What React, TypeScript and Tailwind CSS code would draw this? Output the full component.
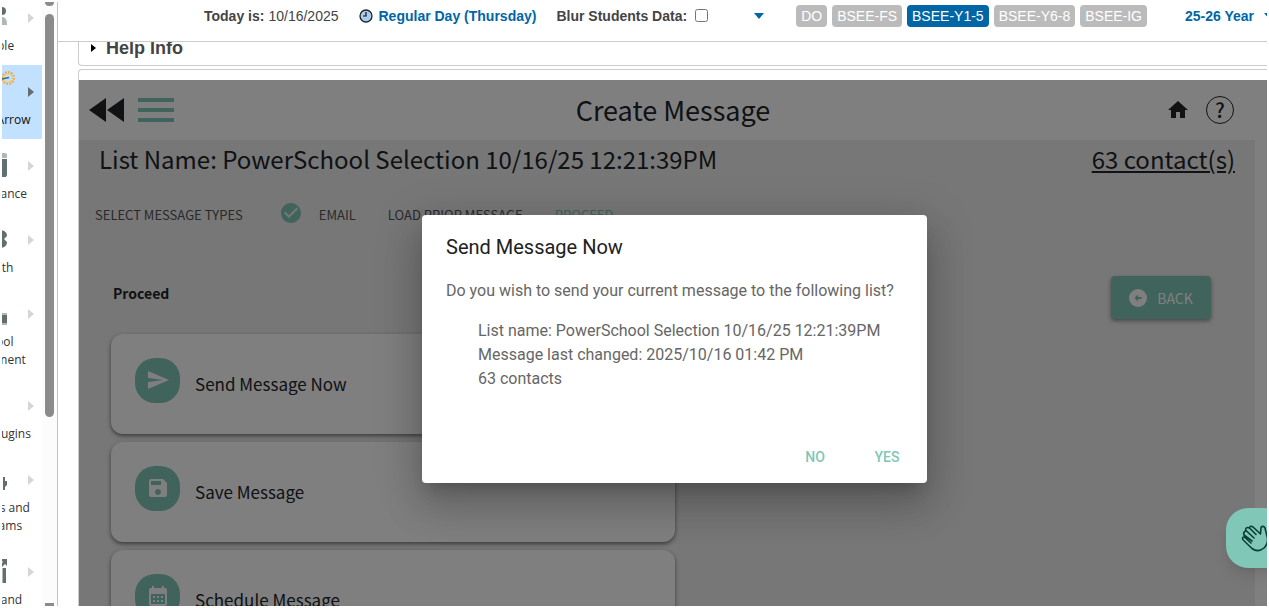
import React, { useState } from "react";
import {
  MdSend,
  MdSave,
  MdCalendarMonth,
  MdHome,
  MdCheckCircle,
} from "react-icons/md";

const schools = ["DO", "BSEE-FS", "BSEE-Y1-5", "BSEE-Y6-8", "BSEE-IG"];

const navItems = [
  { label: "People", icon: "people" },
  { label: "SchoolArrow", icon: "sun" },
  { label: "Attendance", icon: "attendance" },
  { label: "Health", icon: "health" },
  { label: "School Enrollment", icon: "enrollment" },
  { label: "State Plugins", icon: "" },
  { label: "Courses and Programs", icon: "programs" },
  { label: "Tools and", icon: "export" },
];

const actions = [
  { label: "Send Message Now", Icon: MdSend },
  { label: "Save Message", Icon: MdSave },
  { label: "Schedule Message", Icon: MdCalendarMonth },
];

const NavIcon = ({ name }: { name: string }) => {
  if (name === "sun") {
    return (
      <svg viewBox="0 0 40 40" className="-mt-2 size-10 shrink-0" fill="none">
        <circle cx="33" cy="7" r="5.5" stroke="#f0a850" strokeWidth="3" strokeDasharray="1.6 1.2" />
        <circle cx="33" cy="7" r="4" stroke="#f5d860" strokeWidth="1.5" strokeDasharray="1.5 1" />
        <path d="M22 9L34 6.5" stroke="#2870a0" strokeWidth="1.5" />
      </svg>
    );
  }
  return (
    <svg viewBox="0 0 24 24" className="size-6 shrink-0" fill="#636f6f">
      {name === "people" && (
        <>
          <circle cx="19" cy="6" r="4" />
          <path d="M13 20c0-6 3-8 6-8s5 2 5 8z" fill="#b0b7b7" />
        </>
      )}
      {name === "attendance" && (
        <>
          <path d="M2 0h20l2 1v4H2z" fill="#b0b7b7" />
          <path d="M2 6h22v16l-1 2H2z" />
        </>
      )}
      {name === "health" && (
        <path d="M18 3q6 1 6 6l-3 3 3 3q0 5-6 6l-4-9z" />
      )}
      {name === "enrollment" && (
        <>
          <path d="M2 12h22v13H2z" fill="#b0b7b7" />
          <path d="M14 14h10v8H14z" />
        </>
      )}
      {name === "programs" && <path d="M20 10h2v4h2v4l-2 2v3h-2V10z" />}
      {name === "export" && (
        <>
          <path d="M17 0h7v7l-2-2-3 3-2-2 3-3z" />
          <path d="M20 9h3v15h-3z" />
          <path d="M18 9h2v15h-2z" fill="#b0b7b7" />
        </>
      )}
    </svg>
  );
};

const Sidebar = () => (
  <div className="flex shrink-0 border-r border-[#c4c4c4]">
    <nav className="flex w-10 justify-end overflow-hidden">
      <ul className="-mt-[11px] w-[94px] shrink-0">
        {navItems.map((item) => (
          <li key={item.label}>
            <a
              href="#"
              className={
                item.icon === "sun"
                  ? "relative flex flex-col items-center bg-[#c2e0ff] px-2 pt-3.5 pb-2.5 text-[#111]"
                  : "relative flex flex-col items-center px-2 pt-3.5 pb-2.5 text-[#333]"
              }
            >
              <span className="flex h-8 flex-col">
                <NavIcon name={item.icon} />
              </span>
              <span className="text-center font-['Open_Sans',sans-serif] text-xs leading-[18px]">
                {item.label}
              </span>
              <svg viewBox="0 0 6 10" className="absolute top-[22px] right-2 h-2.5 w-1.5">
                <path d="M0 0L6 5L0 10z" fill={item.icon === "sun" ? "#636f6f" : "#d2d7d7"} />
              </svg>
            </a>
          </li>
        ))}
      </ul>
    </nav>
    <div className="flex w-[15px] flex-col items-center bg-[#fcfcfc]">
      <span className="h-1 w-[9px] rounded-b bg-[#8b8b8b]" />
      <span className="mt-2 h-2/3 w-[9px] rounded-full bg-[#8b8b8b]" />
      <span className="mt-auto h-[3px] w-[9px] bg-[#8b8b8b]" />
    </div>
  </div>
);

const TopBar = () => {
  const [school, setSchool] = useState("BSEE-Y1-5");

  return (
    <header className="flex h-10 shrink-0 items-center border-b border-[#ccc] pb-3 pl-[146px] text-sm whitespace-nowrap text-[#444]">
      <b>Today is:</b>
      <span className="ml-1">10/16/2025</span>
      <svg viewBox="0 0 14 14" className="ml-5 size-3.5 shrink-0">
        <circle cx="7" cy="7" r="6" fill="#a9cdf0" stroke="#222" strokeWidth="1.3" />
        <path d="M7 3v4H4" fill="none" stroke="#111" strokeWidth="1.2" />
      </svg>
      <a href="#" className="ml-1.5 font-bold text-[#0066a6]">
        Regular Day (Thursday)
      </a>
      <label htmlFor="blur" className="ml-5 font-bold">
        Blur Students Data:
      </label>
      <input id="blur" type="checkbox" className="ml-2 size-[13px]" />
      <button type="button" aria-label="More" className="ml-[46px]">
        <svg viewBox="0 0 10 6" className="h-1.5 w-2.5">
          <path d="M0 0h10L5 6z" fill="#0066a6" />
        </svg>
      </button>
      <div className="ml-8 flex gap-[5px]">
        {schools.map((s) => (
          <button
            key={s}
            type="button"
            onClick={() => setSchool(s)}
            className={
              s === school
                ? "h-[22px] rounded bg-[#0066a6] px-[5px] text-white"
                : "h-[22px] rounded bg-[#bbb] px-[5px] text-white"
            }
          >
            {s}
          </button>
        ))}
      </div>
      <button type="button" className="ml-[38px] flex items-center gap-2.5 font-bold text-[#0066a6]">
        25-26 Year
        <svg viewBox="0 0 10 6" className="h-1.5 w-2.5">
          <path d="M0 0h10L5 6z" fill="#0066a6" />
        </svg>
      </button>
    </header>
  );
};

const ConfirmDialog = () => (
  <div className="absolute inset-0 flex items-center justify-center bg-black/50 pt-[11px] pl-[3px]">
    <div
      role="dialog"
      aria-labelledby="dialog-title"
      className="w-[505px] rounded bg-white font-[Roboto,sans-serif] shadow-[0_11px_15px_-7px_rgba(0,0,0,.2),0_24px_38px_3px_rgba(0,0,0,.14),0_9px_46px_8px_rgba(0,0,0,.12)]"
    >
      <h2 id="dialog-title" className="px-6 pt-4 text-xl leading-8 text-[#212121]">
        Send Message Now
      </h2>
      <div className="px-6 pt-4 leading-6 text-[#666]">
        <p>Do you wish to send your current message to the following list?</p>
        <div className="mt-4 pl-8">
          <p>List name: PowerSchool Selection 10/16/25 12:21:39PM</p>
          <p>Message last changed: 2025/10/16 01:42 PM</p>
          <p>63 contacts</p>
        </div>
      </div>
      <div className="mt-12 flex justify-end gap-2 px-2 pb-2 text-sm font-medium text-[#80c7b7]">
        <button type="button" className="h-9 w-16">
          NO
        </button>
        <button type="button" className="h-9 w-16">
          YES
        </button>
      </div>
    </div>
  </div>
);

const MessagePanel = () => (
  <section className="relative flex-1 overflow-hidden bg-white font-['Noto_Sans_CJK_SC',sans-serif] text-[#212529]">
    <div className="grid h-15 grid-cols-[1fr_auto_1fr] items-center px-2.5">
      <div className="flex items-center gap-3.5">
        <button type="button" aria-label="Collapse">
          <svg viewBox="0 0 35 24" className="h-6 w-[35px]">
            <path d="M17 0v24L0 12zM35 0v24L18 12z" fill="#212529" />
          </svg>
        </button>
        <button type="button" aria-label="Menu" className="flex flex-col gap-1.5">
          <span className="h-1 w-9 bg-[#80c7b7]" />
          <span className="h-1 w-9 bg-[#80c7b7]" />
          <span className="h-1 w-9 bg-[#80c7b7]" />
        </button>
      </div>
      <h1 className="text-[27px] leading-10">Create Message</h1>
      <div className="flex items-center justify-end gap-4 pr-[23px]">
        <MdHome className="size-6" />
        <button
          type="button"
          aria-label="Help"
          className="flex size-7 items-center justify-center rounded-full border border-[#212529] text-xl leading-6 font-medium"
        >
          ?
        </button>
      </div>
    </div>

    <div className="mr-3 h-full bg-[#eee] pr-5 pl-4">
      <div className="flex justify-between pl-1 text-2xl leading-[38px]">
        <h2>List Name: PowerSchool Selection 10/16/25 12:21:39PM</h2>
        <a href="#" className="underline">
          63 contact(s)
        </a>
      </div>

      <div className="mt-[21px] flex h-8 items-center text-[13px] text-[#555]">
        <button type="button">SELECT MESSAGE TYPES</button>
        <MdCheckCircle className="mb-1 ml-9 size-6 text-[#80c7b7]" />
        <button type="button" className="ml-4">
          EMAIL
        </button>
        <button type="button" className="ml-8">
          LOAD PRIOR MESSAGE
        </button>
        <button type="button" className="ml-8 text-[#80c7b7]">
          PROCEED
        </button>
      </div>

      <div className="mt-[45px] flex items-start justify-between pr-6 pl-[18px]">
        <h3 className="mt-[5px] text-sm leading-6 font-bold">Proceed</h3>
        <button
          type="button"
          className="flex h-[43px] w-[100px] items-center justify-center gap-2.5 rounded bg-[#80c7b7] text-sm text-white shadow-[0_2px_4px_rgba(0,0,0,.4)]"
        >
          <svg viewBox="0 0 20 20" className="size-[18px]">
            <circle cx="10" cy="10" r="10" fill="#fff" />
            <path d="M6 10l4-4v3h4v2h-4v3z" fill="#80c7b7" />
          </svg>
          BACK
        </button>
      </div>

      <div className="mt-[15px] flex w-1/2 min-w-[580px] flex-col gap-2 pl-4">
        {actions.map(({ label, Icon }) => (
          <button
            key={label}
            type="button"
            className="flex h-[100px] items-center gap-[15px] rounded-xl bg-white px-6 text-left text-[17px] shadow-[0_2px_4px_rgba(0,0,0,.5)]"
          >
            <span className="mb-2 flex size-[45px] items-center justify-center rounded-[20px] bg-[#80c7b7] text-white">
              <Icon className="size-6" />
            </span>
            {label}
          </button>
        ))}
      </div>
    </div>

    <ConfirmDialog />
  </section>
);

export default function App() {
  return (
    <div className="flex h-screen overflow-hidden bg-white p-0.5 font-['Liberation_Sans',Arial,sans-serif]">
      <Sidebar />
      <div className="relative flex min-w-0 flex-1 flex-col overflow-hidden">
        <TopBar />
        <main className="flex min-h-0 flex-1 flex-col overflow-hidden pl-5">
          <div className="-mt-2 mb-[3px] flex h-8 shrink-0 items-center gap-2.5 rounded-bl border-b border-l border-[#ccc] pb-1 pl-3">
            <svg viewBox="0 0 5 8" className="h-2 w-[5px]">
              <path d="M0 0L5 4L0 8z" fill="#000" />
            </svg>
            <h2 className="text-lg leading-6 font-bold text-[#444]">Help Info</h2>
          </div>
          <div className="flex min-h-0 flex-1 flex-col rounded-tl border-t border-l border-[#ccc] pt-2.5">
            <MessagePanel />
          </div>
        </main>
        <button
          type="button"
          aria-label="Chat"
          className="absolute -right-[19px] bottom-[38px] flex size-15 items-center justify-center rounded-[22px] bg-[#80c7b7] shadow-lg"
        >
          <svg
            viewBox="0 0 30 30"
            className="size-[30px]"
            fill="none"
            stroke="#083d36"
            strokeWidth="1.6"
            strokeLinecap="round"
            strokeLinejoin="round"
          >
            <path d="M10 20L4 14.5Q1.500 13 1.500 16Q2 17 11 25.500Q17 30 23 25Q28 20 26 13L24 5Q22 2 20 4.500L19.500 11L12 4Q9 2 8.500 5L15 11.500M8.500 5Q5 3.500 4.500 7L13 15M4.500 8Q2 9 3 12L11 18" />
          </svg>
        </button>
      </div>
    </div>
  );
}
